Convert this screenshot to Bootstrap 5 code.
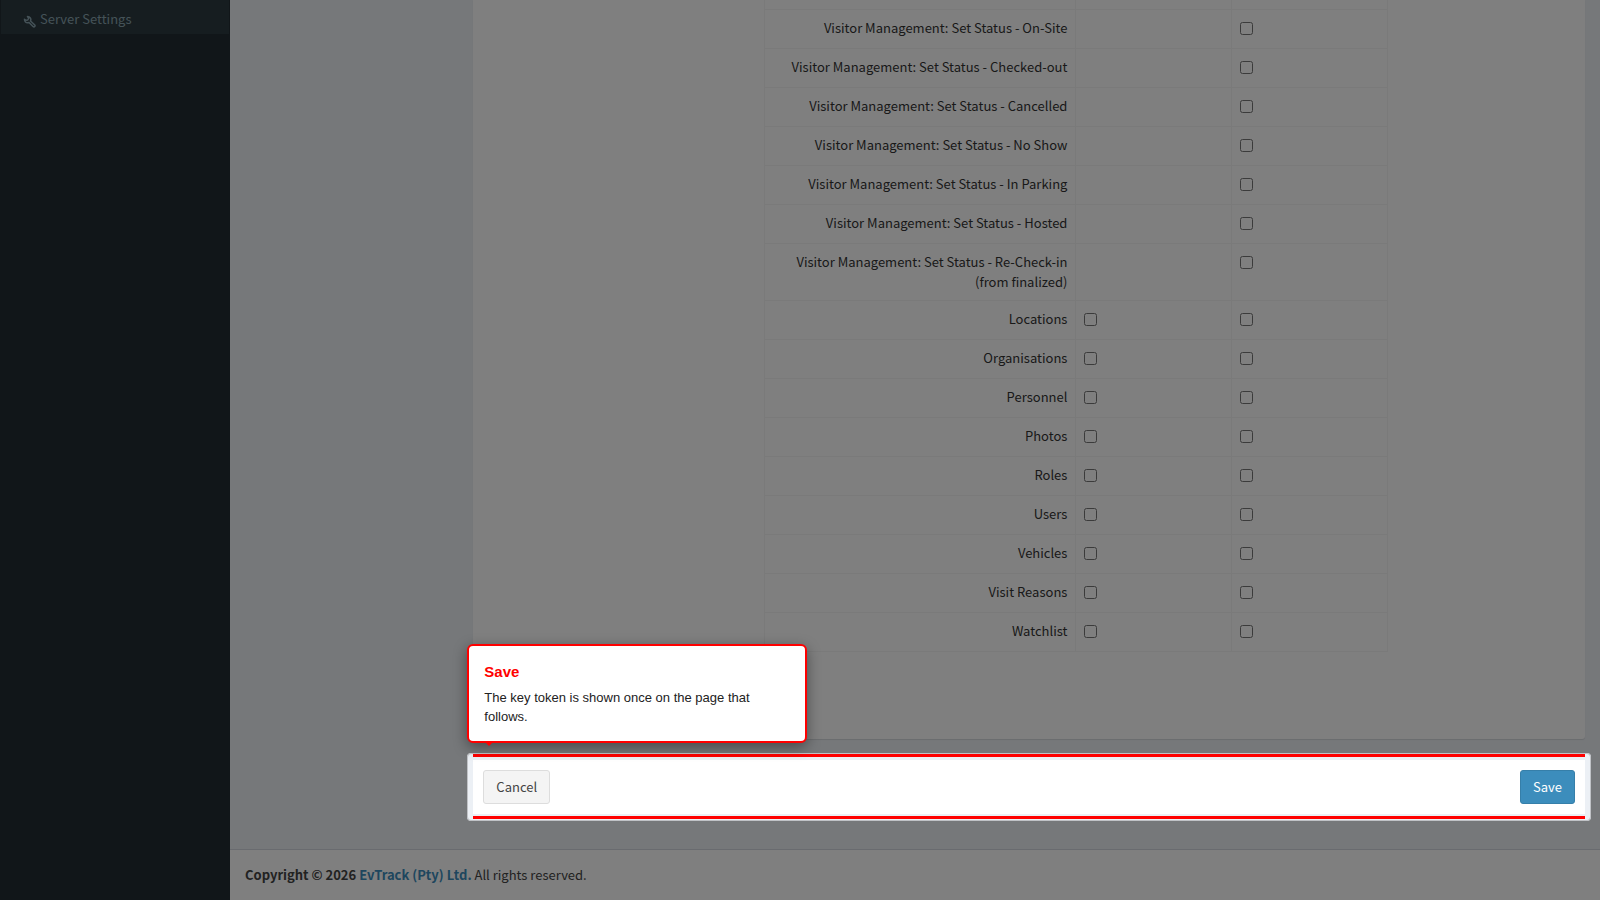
<!DOCTYPE html>
<html lang="en">
<head>
<meta charset="utf-8">
<meta name="viewport" content="width=device-width, initial-scale=1">
<title>EvTrack - Access Key</title>
<link href="https://cdn.jsdelivr.net/npm/bootstrap@5.3.0/dist/css/bootstrap.min.css" rel="stylesheet">
<style>
  body { font-family: "Source Sans Pro", "Noto Sans CJK SC", sans-serif; font-size: 13px; line-height: 20px; color: #333; background: #ecf0f5; overflow-x: hidden; }
  a { color: #3c8dbc; }
  .app-side { width: 230px; background: #222d32; }
  .side-link { color: #8aa4af; background: #2c3b41; margin: 0 1px; padding: 9px 5px 5px 22px; gap: 4px; }
  .app-main { min-width: 0; }
  .panel { background: #fff; border-radius: 0 0 3px 3px; box-shadow: 0 1px 1px rgba(0,0,0,.1); padding: 0 10px 87px; margin-bottom: 21px; }
  .rights { table-layout: fixed; margin: 0; border-color: #f4f4f4; color: inherit; }
  .rights > tbody > tr > * { border: 1px solid #f4f4f4; padding: 8px; font-weight: 400; color: #333; vertical-align: top; }
  .rights > tbody > tr.cut > * { height: 9px; padding: 0; border-top: 0; }
  .rights th { text-align: right; }
  .rights label { display: block; }
  .rights input { display: block; width: 13px; height: 13px; margin: 4px 0 5px; }
  .actions { background: #fff; padding: 10px; margin-bottom: 35px; }
  .actions .btn { font-size: 13px; line-height: 20px; padding: 6px 12px; border-radius: 3px; }
  .btn-cancel, .btn-cancel:hover { background: #f4f4f4; border-color: #ddd; color: #444; }
  .btn-save, .btn-save:hover { background: #3c8dbc; border-color: #367fa9; color: #fff; }
  .spotlight { position: absolute; inset: -7px -6px; border-radius: 4px; box-shadow: 0 0 0 9999px rgba(0,0,0,.5); border: 1px solid rgba(90,90,90,.3); pointer-events: none; z-index: 5; }
  .marker { position: absolute; inset: -6px 0 -5px; border: solid red; border-width: 3px 0; box-shadow: inset 0 3px #ecf0f5, inset 0 -2px #ecf0f5; pointer-events: none; z-index: 6; }
  .actions::before, .actions::after { content: ""; position: absolute; top: -7px; bottom: -7px; width: 5px; background: #ecf0f5; }
  .actions::before { left: -5px; } .actions::after { right: -5px; }
  .tour { position: absolute; left: -6px; bottom: calc(100% + 17px); width: 340px; max-width: 100%; z-index: 7; background: #fff; border: 2px solid red; border-radius: 6px; padding: 16px 15px 15px; box-shadow: 0 4px 14px rgba(0,0,0,.4); font-family: "Liberation Sans", Arial, sans-serif; color: #222; font-size: 13px; line-height: 19px; }
  .tour h2 { font-size: 15px; line-height: 19px; font-weight: 700; color: red; margin: 0 0 7px; }
  .tour p { margin: 0; }
  .tour::after { content: ""; position: absolute; left: 16px; top: calc(100% + 1px); border: solid transparent; border-width: 4px 4px 0; border-top-color: red; }
  .app-foot { background: #fff; border-top: 1px solid #d2d6de; padding: 15px; color: #444; }
  .app-foot a { text-decoration: none; }
</style>
</head>
<body>
<div class="d-flex min-vh-100">
  <nav class="app-side flex-shrink-0">
    <a href="#" class="side-link d-flex align-items-center text-decoration-none">
      <svg class="mt-1" width="13" height="13" viewBox="0 0 26 26" fill="none" stroke="currentColor" aria-hidden="true"><path d="M3 8.500C3 13 6 16 10 15.500L12 15 20 23Q22 24.500 23.500 23T23 19.500L15 12C17 7 14 3 9 3L11.500 6.500 9.500 10 6 10.500Z" stroke-width="3" stroke-linejoin="round"/></svg>
      <span>Server Settings</span>
    </a>
  </nav>
  <div class="app-main flex-grow-1 d-flex flex-column">
    <main class="flex-grow-1">
      <form class="row justify-content-end mx-0" onsubmit="return false">
        <div class="col-10" style="--bs-gutter-x:30px">
          <section class="panel">
            <div class="row" style="--bs-gutter-x:30px">
              <div class="col-7 offset-3">
                <table class="table rights">
                  <colgroup><col style="width:50%"><col style="width:25%"><col style="width:25%"></colgroup>
                  <tbody id="rows"><tr class="cut"><td></td><td></td><td></td></tr></tbody>
                </table>
              </div>
            </div>
          </section>
          <div class="actions position-relative d-flex justify-content-between">
            <button type="button" class="btn btn-cancel">Cancel</button>
            <button type="submit" class="btn btn-save">Save</button>
            <div class="spotlight"></div>
            <div class="marker"></div>
            <div class="tour" role="dialog" aria-labelledby="tour-title">
              <h2 id="tour-title">Save</h2>
              <p>The key token is shown once on the page that follows.</p>
            </div>
          </div>
        </div>
      </form>
    </main>
    <footer class="app-foot"><strong>Copyright © 2026 <a href="#">EvTrack (Pty) Ltd.</a></strong> All rights reserved.</footer>
  </div>
</div>
<script>
  const statuses = ['On-Site', 'Checked-out', 'Cancelled', 'No Show', 'In Parking', 'Hosted', 'Re-Check-in (from finalized)'];
  const resources = ['Locations', 'Organisations', 'Personnel', 'Photos', 'Roles', 'Users', 'Vehicles', 'Visit Reasons', 'Watchlist'];
  const row = (name, id, readable) => `<tr><th scope="row"><label for="${id}-write">${name}</label></th>
    <td>${readable ? `<input type="checkbox" id="${id}-read" aria-label="${name}: read">` : ''}</td>
    <td><input type="checkbox" id="${id}-write"></td></tr>`;
  document.getElementById('rows').insertAdjacentHTML('beforeend',
    statuses.map((s, i) => row('Visitor Management: Set Status - ' + s, 'status' + i, false)).join('') +
    resources.map((r, i) => row(r, 'res' + i, true)).join(''));
</script>
<script src="https://cdn.jsdelivr.net/npm/bootstrap@5.3.0/dist/js/bootstrap.bundle.min.js"></script>
</body>
</html>
